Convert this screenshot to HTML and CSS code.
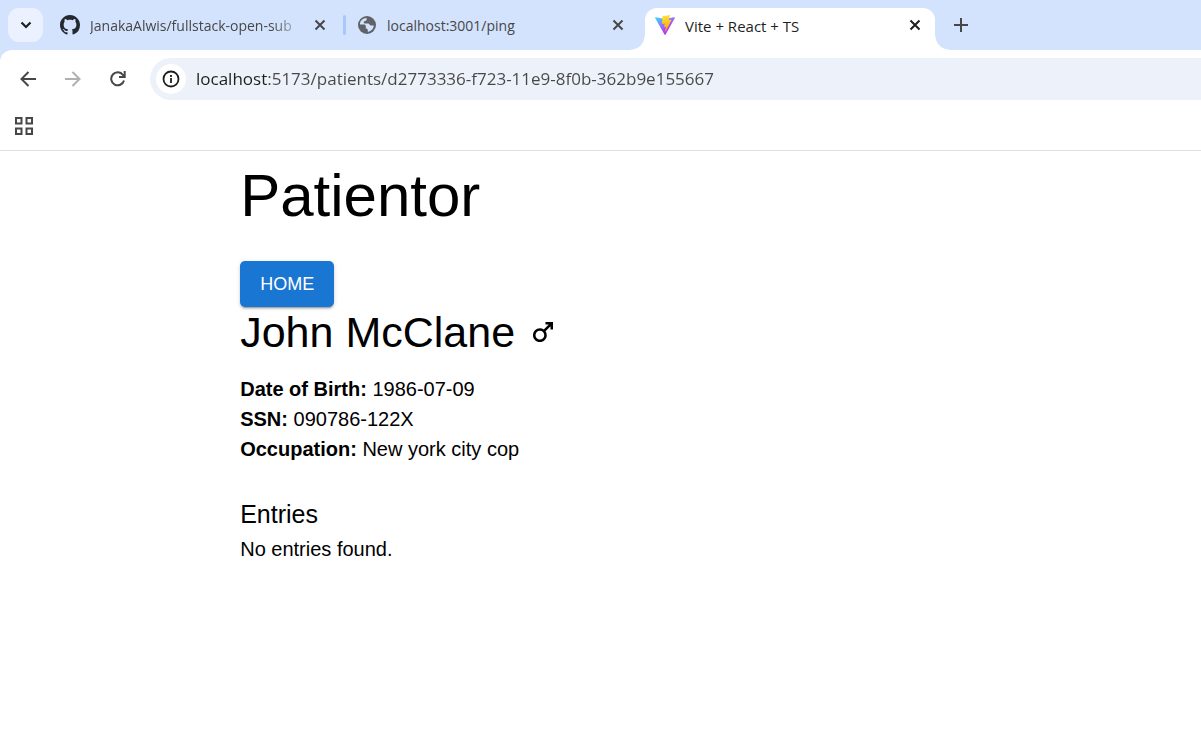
FILE: index.html
```html
<!DOCTYPE html>
<html lang="en">
<head>
<meta charset="utf-8">
<meta name="viewport" content="width=device-width, initial-scale=1">
<title>Vite + React + TS</title>
<link rel="stylesheet" href="styles.css">
</head>
<body>
<header class="browser">
  <div class="tab-strip">
    <button class="tab-search" aria-label="Search tabs">
      <svg width="12" height="8" viewBox="0 0 12 8"><path d="M1.500 1.500 6 6l4.500-4.500" fill="none" stroke="#1f1f1f" stroke-width="2.200"/></svg>
    </button>
    <div class="tab tab-first">
      <svg class="favicon" width="20" height="20" viewBox="0 0 16 16"><path fill="#24292f" d="M8 0C3.580 0 0 3.580 0 8c0 3.540 2.290 6.530 5.470 7.590.4.070.55-.17.55-.38 0-.19-.01-.82-.01-1.490-2.010.37-2.530-.49-2.690-.94-.09-.23-.48-.94-.82-1.130-.28-.15-.68-.52-.01-.53.63-.01 1.080.58 1.230.82.72 1.210 1.870.87 2.330.66.07-.52.28-.87.51-1.070-1.780-.2-3.640-.89-3.640-3.950 0-.87.31-1.590.82-2.150-.08-.2-.36-1.020.08-2.120 0 0 .67-.21 2.200.82.64-.18 1.320-.27 2-.27s1.360.09 2 .27c1.530-1.040 2.200-.82 2.200-.82.44 1.100.16 1.920.08 2.120.51.56.82 1.270.82 2.150 0 3.070-1.870 3.750-3.650 3.950.29.25.54.73.54 1.480 0 1.070-.01 1.930-.01 2.200 0 .21.15.46.55.38A8.010 8.010 0 0 0 16 8c0-4.420-3.580-8-8-8z"/></svg>
      <span class="tab-title fade">JanakaAlwis/fullstack-open-sub</span>
      <button class="close" aria-label="Close tab"><svg width="12" height="12" viewBox="0 0 12 12"><path d="m1.500 1.500 9 9m0-9-9 9"/></svg></button>
    </div>
    <span class="divider"></span>
    <div class="tab tab-second">
      <svg class="favicon" width="20" height="20" viewBox="0 0 20 20"><circle cx="10" cy="10" r="9" fill="#5f6368"/><path fill="#d3e3fd" d="M10.500 3c-1.700.2-1.200 1.600-.6 2.100-.9 1.100-3 .7-3.200 2.100-.1 1 .9 1.300 2 1.300h2.400c1.500 0 1.300 2.100 3 2.100h2.700c-.3 3.500-2.900 5.900-6 6.300v-1.800c0-1.200-.9-1.700-2-1.700v-2.200c0-1-.8-1.700-1.900-1.700H3c-.3-3.700 3.200-7 7.500-6.500z"/></svg>
      <span class="tab-title">localhost:3001/ping</span>
      <button class="close" aria-label="Close tab"><svg width="12" height="12" viewBox="0 0 12 12"><path d="m1.500 1.500 9 9m0-9-9 9"/></svg></button>
    </div>
    <div class="tab tab-active">
      <svg class="favicon" width="20" height="20" viewBox="0 0 256 257">
        <defs>
          <linearGradient id="tri" x1="0" x2=".58" y1=".08" y2=".79"><stop offset="0" stop-color="#41d1ff"/><stop offset="1" stop-color="#bd34fe"/></linearGradient>
          <linearGradient id="bolt" x1=".43" x2=".5" y1=".02" y2=".9"><stop offset="0" stop-color="#ffea83"/><stop offset=".08" stop-color="#ffdd35"/><stop offset="1" stop-color="#ffa800"/></linearGradient>
        </defs>
        <path fill="url(#tri)" d="M255 38 134 254c-2 4-8 4-11 0L1 38c-3-5 1-11 7-10l120 22 117-22c7-1 12 5 10 10z"/>
        <path fill="url(#bolt)" d="M185 0 97 17c-2 0-3 2-3 4l-5 91c0 3 2 5 5 4l24-6c3 0 5 2 5 5l-7 36c-1 3 2 5 5 4l15-4c3-1 5 1 5 4l-12 55c0 4 4 5 6 3l76-150c1-3-1-6-4-5l-25 5c-3 0-5-2-4-5l16-57c0-3-2-5-5-5z"/>
      </svg>
      <span class="tab-title">Vite + React + TS</span>
      <button class="close" aria-label="Close tab"><svg width="12" height="12" viewBox="0 0 12 12"><path d="m1.500 1.500 9 9m0-9-9 9"/></svg></button>
    </div>
    <button class="new-tab" aria-label="New tab"><svg width="14" height="14" viewBox="0 0 14 14"><path d="M7 0v14M0 7h14" stroke="#474747" stroke-width="2"/></svg></button>
  </div>
  <div class="toolbar">
    <button class="nav" aria-label="Back"><svg width="16" height="16" viewBox="0 0 16 16"><path d="M16 8H2M8.500 1 1.500 8l7 7"/></svg></button>
    <button class="nav nav-disabled" aria-label="Forward"><svg width="16" height="16" viewBox="0 0 16 16"><path d="M0 8h14M7.500 1l7 7-7 7"/></svg></button>
    <button class="nav" aria-label="Reload"><svg width="16" height="16" viewBox="0 0 16 16"><path d="M14 9.500A6.500 6.500 0 1 1 13 4l1.500 2M14.700 0v6H9"/></svg></button>
    <div class="omnibox">
      <button class="site-info" aria-label="View site information"><svg width="18" height="18" viewBox="0 0 18 18"><circle cx="9" cy="9" r="7.500" fill="none" stroke="#1f1f1f" stroke-width="1.800"/><path d="M9 8v5M9 5v2" stroke="#1f1f1f" stroke-width="1.800"/></svg></button>
      <input class="url" type="text" aria-label="Address" spellcheck="false" value="localhost:5173/patients/d2773336-f723-11e9-8f0b-362b9e155667">
    </div>
  </div>
  <div class="bookmarks">
    <button class="apps" aria-label="Apps"><svg width="18" height="18" viewBox="0 0 18 18"><path d="M1 1h5.500v5.500H1zM11.500 1H17v5.500h-5.500zM1 11.500h5.500V17H1zM11.500 11.500H17V17h-5.500z" fill="none" stroke="#474747" stroke-width="2"/></svg></button>
  </div>
</header>
<main class="page">
  <h1 class="app-title">Patientor</h1>
  <a class="home" href="/">HOME</a>
  <h2 class="patient-name">John McClane
    <svg width="30" height="30" viewBox="0 0 24 24" role="img" aria-label="Male"><path d="M9.500 11c1.930 0 3.500 1.570 3.500 3.500S11.430 18 9.500 18 6 16.430 6 14.500 7.570 11 9.500 11zm0-2C6.460 9 4 11.460 4 14.500S6.460 20 9.500 20s5.500-2.460 5.500-5.500c0-1.160-.36-2.230-.97-3.120L18 7.420V10h2V4h-6v2h2.580l-3.970 3.970C11.730 9.360 10.660 9 9.500 9z"/></svg>
  </h2>
  <div class="details">
    <p><strong>Date of Birth:</strong> 1986-07-09</p>
    <p><strong>SSN:</strong> 090786-122X</p>
    <p><strong>Occupation:</strong> New york city cop</p>
  </div>
  <section>
    <h3 class="entries-title">Entries</h3>
    <p>No entries found.</p>
  </section>
</main>
</body>
</html>
```
FILE: styles.css
```css
* { box-sizing: border-box; }
body { margin: 0; background: #fff; color: #000; font: 20px/30px "Liberation Sans", Arial, sans-serif; }
h1, h2, h3, p { margin: 0; font-weight: 400; }
button { display: flex; align-items: center; justify-content: center; flex: none; padding: 0; border: 0; background: none; }
svg { display: block; flex: none; }

.browser { border-bottom: 1px solid #dfe1e5; font-family: "Open Sans", "Segoe UI", sans-serif; background: linear-gradient(#d3e3fd 64px, #fff 64px); }
.tab-strip { display: flex; align-items: flex-start; height: 50px; padding: 8px 8px 0; }
.tab-search { width: 35px; height: 34px; border-radius: 11px; background: #ebf1fe; }
.tab { display: flex; align-items: center; height: 34px; gap: 10px; }
.tab-first { width: 266px; margin-left: 17px; }
.tab-second { width: 267px; margin-left: 11px; }
.tab-active { position: relative; width: 290px; height: 42px; margin-left: 21px; padding: 0 14px 8px 10px; border-radius: 12px 12px 0 0; background: #fff; }
.tab-active::before, .tab-active::after { content: ""; position: absolute; bottom: 0; width: 14px; height: 14px; }
.tab-active::before { right: 100%; background: radial-gradient(circle at 0 0, transparent 13px, #fff 14px); }
.tab-active::after { left: 100%; background: radial-gradient(circle at 100% 0, transparent 13px, #fff 14px); }
.tab-title { flex: 1; min-width: 0; padding-top: 1px; overflow: hidden; white-space: nowrap; font-size: 14px; line-height: 20px; color: #474747; }
.tab-active .tab-title { font-size: 15px; color: #1f1f1f; }
.fade { mask-image: linear-gradient(to right, #000 calc(100% - 32px), transparent); }
.close { width: 12px; height: 12px; }
.close path { stroke: #474747; stroke-width: 2; }
.tab-active .close path { stroke: #1f1f1f; }
.divider { width: 3px; height: 20px; margin: 7px 0 0 17px; border-radius: 2px; background: #a8c7fa; }
.new-tab { width: 34px; height: 34px; margin-left: 9px; }

.toolbar { display: flex; align-items: flex-start; padding: 8px 0 0 10px; border-radius: 12px 0 0 0; background: #fff; }
.nav { width: 35px; height: 42px; margin-right: 10px; }
.nav path { fill: none; stroke: #474747; stroke-width: 2; }
.nav-disabled path { stroke: #b0b0b0; }
.omnibox { display: flex; flex: 1; align-items: center; gap: 10px; height: 42px; margin-left: 5px; padding-left: 6px; border-radius: 21px 0 0 21px; background: #ecf1fa; }
.site-info { width: 30px; height: 30px; border-radius: 50%; background: #fff; }
.url { flex: 1; min-width: 0; padding: 0; border: 0; outline: 0; font: 17px/24px "Open Sans", "Segoe UI", sans-serif; color: transparent; background: linear-gradient(to right, #1f1f1f 71px, #474747 71px); background-clip: text; -webkit-background-clip: text; }
.bookmarks { display: flex; align-items: center; height: 50px; padding: 1px 0 0 15px; }
.apps { width: 18px; height: 18px; }

.page { padding: 10px 20%; }
.app-title { margin-bottom: 30px; font-size: 60px; line-height: 70px; }
.home { display: block; width: fit-content; padding: 8px 20px; border-radius: 5px; background: #1976d2; color: #fff; font-size: 18px; line-height: 30px; text-decoration: none; box-shadow: 0 3px 1px -2px rgba(0,0,0,.2), 0 2px 2px rgba(0,0,0,.14), 0 1px 5px rgba(0,0,0,.12); }
.patient-name { display: flex; align-items: center; gap: 13px; margin-bottom: 17px; font-size: 43px; line-height: 50px; }
.details { margin-bottom: 30px; }
.entries-title { font-size: 25px; line-height: 40px; }
```
